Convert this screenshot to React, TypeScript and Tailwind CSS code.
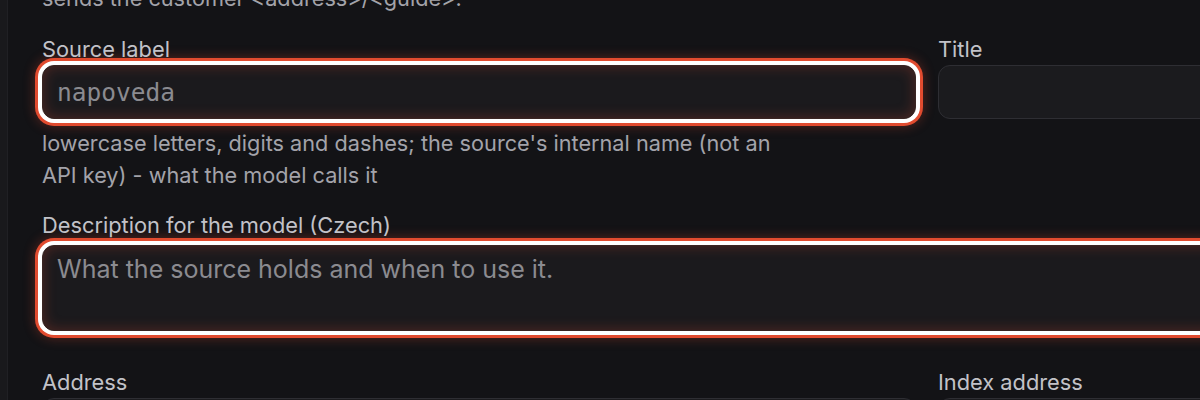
import React from "react";

const focusRing =
  "border border-[#3a2522] shadow-[inset_0_0_14px_rgba(225,75,50,0.28),0_0_0_4px_#ffffff,0_0_0_7px_#e14b2f,0_0_12px_7px_rgba(225,75,50,0.35)]";

const Label = ({ children }: { children: React.ReactNode }) => (
  <label className="block text-[21.8px] leading-[24px] text-[#c2c2c8]">{children}</label>
);

const App = () => {
  return (
    <div className="flex h-[400px] w-[1200px] overflow-hidden bg-[#131316] font-['Inter','Noto_Sans',sans-serif]">
      <aside className="w-[8px] shrink-0 border-r border-[#202024] bg-[#19191c]" />

      <main className="w-[1340px] shrink-0 pl-[34px]">
        <p className="mt-[-18px] text-[21.7px] leading-[32px] text-[#a3a3aa]">
          sends the customer &lt;address&gt;/&lt;guide&gt;.
        </p>

        <div className="mt-[23px] grid grid-cols-[874px_420px] gap-x-[22px]">
          <div>
            <Label>Source label</Label>
            <input
              placeholder="napoveda"
              className={`mt-[4px] block h-[54px] w-full rounded-[12px] bg-[#1b1a1d] px-[14px] font-['DejaVu_Sans_Mono',monospace] text-[24.5px] text-[#d0d0d4] outline-none placeholder:text-[#8b8b90] ${focusRing}`}
            />
            <p className="mt-[8px] max-w-[752px] text-[21.7px] leading-[32px] text-[#a3a3aa]">
              lowercase letters, digits and dashes; the source's internal name (not an API key) - what the model calls it
            </p>
          </div>
          <div>
            <Label>Title</Label>
            <input className="mt-[4px] block h-[54px] w-full rounded-[12px] border border-[#2e2e33] bg-[#1b1b1e] outline-none" />
          </div>
        </div>

        <div className="mt-[22px]">
          <Label>Description for the model (Czech)</Label>
          <textarea
            placeholder="What the source holds and when to use it."
            className={`mt-[8px] block h-[86px] w-full resize-none rounded-[12px] bg-[#1b1a1d] px-[14px] py-[8px] text-[25px] leading-[30px] text-[#d0d0d4] outline-none placeholder:text-[#8b8b90] ${focusRing}`}
          />
        </div>

        <div className="mt-[39px] grid grid-cols-[874px_420px] gap-x-[22px]">
          <div>
            <Label>Address</Label>
            <input className="mt-[4px] block h-[54px] w-full rounded-[12px] border border-[#2e2e33] bg-[#1b1b1e] outline-none" />
          </div>
          <div>
            <Label>Index address</Label>
            <input className="mt-[4px] block h-[54px] w-full rounded-[12px] border border-[#2e2e33] bg-[#1b1b1e] outline-none" />
          </div>
        </div>
      </main>
    </div>
  );
};

export default App;
